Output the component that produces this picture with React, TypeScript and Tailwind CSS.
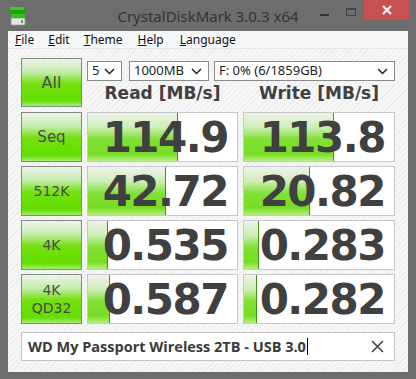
import React from 'react';

interface Row {
  label: string[];
  read: string;
  write: string;
  readFill: number;
  writeFill: number;
}

const rows: Row[] = [
  { label: ['Seq'], read: '114.9', write: '113.8', readFill: 90, writeFill: 90 },
  { label: ['512K'], read: '42.72', write: '20.82', readFill: 78, writeFill: 66 },
  { label: ['4K'], read: '0.535', write: '0.283', readFill: 20, writeFill: 15 },
  { label: ['4K', 'QD32'], read: '0.587', write: '0.282', readFill: 22, writeFill: 13 },
];

const btn =
  'border border-[#808a80] bg-[linear-gradient(to_bottom,#eef4ec_0%,#c4ecaa_28%,#74e010_52%,#62de00_88%,#a6ee70_100%)] flex flex-col items-center justify-center text-[#4a4a4a] leading-[18px]';

function Chevron() {
  return (
    <svg width="11" height="7" viewBox="0 0 11 7" className="shrink-0">
      <path d="M1 1 L5.5 5.5 L10 1" fill="none" stroke="#222" strokeWidth="1.5" />
    </svg>
  );
}

function Select({ value, width }: { value: string; width: string }) {
  return (
    <div className={`${width} h-[20px] bg-white border border-[#8a8a8a] flex items-center justify-between pl-[4px] pr-[6px] text-[13px] text-[#222]`}>
      <span>{value}</span>
      <Chevron />
    </div>
  );
}

function Meter({ value, fill, width }: { value: string; fill: number; width: string }) {
  return (
    <div className={`${width} h-[50px] relative bg-white border border-[#c8c8c8] overflow-hidden`}>
      <div
        className="absolute left-0 top-0 bottom-0 bg-[linear-gradient(to_bottom,#eef2ec_0%,#cdeeb6_30%,#80e034_55%,#78de22_85%,#b4f080_100%)] border-r border-[#3d9418]"
        style={{ width: fill }}
      />
      <div className="relative h-full flex items-center justify-end pr-[9px] font-['DejaVu_Sans',sans-serif] font-bold text-[42px] tracking-[-1.5px] text-[#404040]">
        {value}
      </div>
    </div>
  );
}

export default function App() {
  return (
    <div className="w-[416px] h-[379px] bg-[#6d6d6d] flex flex-col font-['Noto_Sans',sans-serif]">
      {/* Title bar */}
      <div className="h-[31px] relative flex items-center justify-center">
        <svg width="18" height="20" viewBox="0 0 18 20" className="absolute left-[9px] top-[7px]">
          <rect x="1" y="0" width="14" height="3" fill="#3ccc1c" />
          <rect x="1" y="3" width="16" height="3" fill="#1ea010" />
          <rect x="2" y="7" width="14" height="3" fill="#2fbf18" />
          <rect x="2" y="11" width="14" height="7" rx="1" fill="#e4e4e4" stroke="#9a9a9a" strokeWidth="0.8" />
          <rect x="12" y="13" width="2" height="3" fill="#30c020" />
        </svg>
        <span className="text-[15px] text-[#333] mt-[1px]">CrystalDiskMark 3.0.3 x64</span>
        <div className="absolute left-[320px] top-[14px] w-[9px] h-[2px] bg-[#333]" />
        <div className="absolute left-[346px] top-[8px] w-[10px] h-[8px] border border-[#444] border-t-2" />
        <div className="absolute left-[364px] top-0 w-[45px] h-[20px] bg-[#c75050] flex items-center justify-center">
          <svg width="10" height="10" viewBox="0 0 10 10">
            <path d="M1 1 L9 9 M9 1 L1 9" stroke="#fff" strokeWidth="2" />
          </svg>
        </div>
      </div>

      {/* Client */}
      <div className="mx-[8px] mb-[7px] flex-1 flex flex-col bg-[repeating-linear-gradient(135deg,#f6f6f6_0px,#f6f6f6_3px,#ececec_3px,#ececec_4px)]">
        <div className="h-[18px] bg-[#f5f6f7] border-b border-[#e4e4e4] flex items-center pl-[7px] gap-[14px] text-[12px] text-[#111]">
          <span><u>F</u>ile</span>
          <span><u>E</u>dit</span>
          <span><u>T</u>heme</span>
          <span className="ml-[1px]"><u>H</u>elp</span>
          <span className="ml-[2px]"><u>L</u>anguage</span>
        </div>

        <div className="px-[13px] pt-[9px] flex flex-col">
          <div className="flex gap-[5px]">
            <div className={`${btn} w-[61px] h-[49px] font-['DejaVu_Sans',sans-serif] text-[16px]`}>All</div>
            <div className="flex flex-col">
              <div className="flex mt-[3px]">
                <Select value="5" width="w-[35px]" />
                <div className="w-[7px]" />
                <Select value="1000MB" width="w-[80px]" />
                <div className="w-[5px]" />
                <Select value="F: 0% (6/1859GB)" width="w-[181px]" />
              </div>
              <div className="flex gap-[5px] h-[26px] items-center font-['DejaVu_Sans',sans-serif] font-bold text-[17px] text-[#404040]">
                <div className="w-[151px] text-center">Read [MB/s]</div>
                <div className="w-[152px] text-center">Write [MB/s]</div>
              </div>
            </div>
          </div>

          <div className="flex flex-col gap-[4px] mt-[5px]">
            {rows.map(r => (
              <div key={r.read} className="flex gap-[5px]">
                <div
                  className={`${btn} w-[61px] h-[50px] font-['DejaVu_Sans',sans-serif] ${r.label[0] === 'Seq' ? 'text-[15px]' : 'text-[14px]'}`}
                >
                  {r.label.map(l => (
                    <span key={l}>{l}</span>
                  ))}
                </div>
                <Meter value={r.read} fill={r.readFill} width="w-[151px]" />
                <Meter value={r.write} fill={r.writeFill} width="w-[152px]" />
              </div>
            ))}
          </div>

          <div className="mt-[8px] h-[29px] bg-white border border-[#c4c4c4] flex items-center pl-[6px] pr-[10px]">
            <span className="font-['Open_Sans',sans-serif] font-bold text-[14.5px] text-[#3a3a3a]">
              WD My Passport Wireless 2TB - USB 3.0
            </span>
            <span className="w-[1px] h-[17px] bg-black ml-[1px]" />
            <div className="flex-1" />
            <svg width="13" height="13" viewBox="0 0 13 13">
              <path d="M1 1 L12 12 M12 1 L1 12" stroke="#444" strokeWidth="1.6" />
            </svg>
          </div>
        </div>
      </div>
    </div>
  );
}
